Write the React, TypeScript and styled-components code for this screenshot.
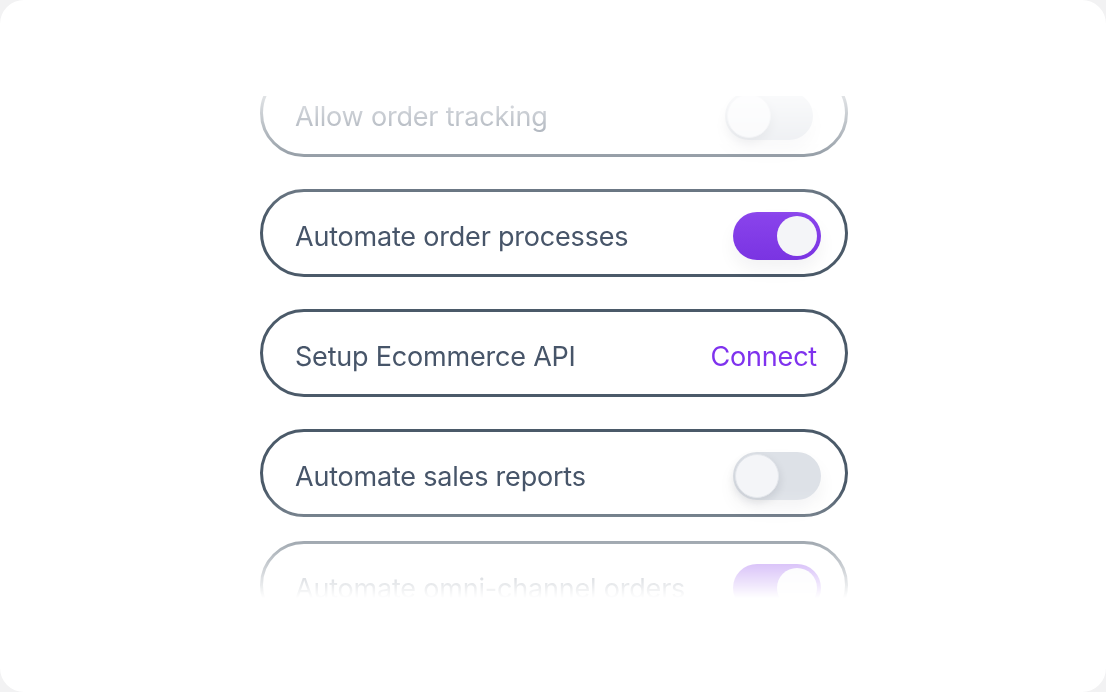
import React from "react";
import styled, { createGlobalStyle } from "styled-components";

const Global = createGlobalStyle`
  html, body { margin: 0; padding: 0; background: #f2f2f3; }
  body { font-family: Inter, "Open Sans", sans-serif; }
`;

const Card = styled.div`
  width: 1106px;
  height: 692px;
  box-sizing: border-box;
  background: #ffffff;
  border-radius: 24px;
  display: flex;
  justify-content: center;
  align-items: flex-start;
  padding: 96px 0 0 2px;
`;

const Viewport = styled.div`
  width: 590px;
  height: 503px;
  overflow: hidden;
  -webkit-mask-image: linear-gradient(
    to bottom,
    rgba(0, 0, 0, 0.17) 0px,
    #000 120px,
    #000 394px,
    transparent 502px
  );
  mask-image: linear-gradient(
    to bottom,
    rgba(0, 0, 0, 0.17) 0px,
    #000 120px,
    #000 394px,
    transparent 502px
  );
`;

const List = styled.div`
  display: flex;
  flex-direction: column;
  gap: 32px;
  padding: 0 1px;
  transform: translateY(-27px);
`;

const Row = styled.div<{ $shift?: number }>`
  height: 88px;
  box-sizing: border-box;
  border: 3px solid #4b5a69;
  border-radius: 44px;
  display: flex;
  align-items: center;
  justify-content: space-between;
  padding: 5px 24px 0 32px;
  margin-top: ${(p) => p.$shift ?? 0}px;
  background: #fff;
`;

const Label = styled.span`
  font-family: Inter, "Open Sans", sans-serif;
  font-size: 27px;
  line-height: 32px;
  padding-top: 3px;
  color: #475569;
  letter-spacing: -0.2px;
`;

const Action = styled.button`
  border: none;
  background: none;
  padding: 3px 4px 0 0;
  font-family: Inter, "Open Sans", sans-serif;
  font-size: 27px;
  line-height: 32px;
  letter-spacing: -0.2px;
  color: #7f32ee;
  cursor: pointer;
`;

const Track = styled.div<{ $on: boolean; $nudge?: number }>`
  width: 88px;
  height: 48px;
  box-sizing: border-box;
  border-radius: 24px;
  padding: 4px;
  display: flex;
  justify-content: ${(p) => (p.$on ? "flex-end" : "flex-start")};
  align-items: center;
  margin-right: ${(p) => p.$nudge ?? 0}px;
  background: ${(p) =>
    p.$on ? "linear-gradient(180deg, #8a44ec 0%, #7a34e2 100%)" : "#dde1e7"};
  box-shadow: 0 10px 18px rgba(15, 23, 42, 0.05);
`;

const Knob = styled.div<{ $on: boolean }>`
  width: 40px;
  height: 40px;
  border-radius: 50%;
  box-sizing: border-box;
  background: #f4f5f8;
  ${(p) =>
    p.$on
      ? ""
      : `
    margin-left: -2px;
    width: 44px;
    height: 44px;
    border: 1px solid #e4e7ec;
    box-shadow: 0 4px 10px rgba(15, 23, 42, 0.12);
  `}
`;

const Toggle = ({ on, nudge }: { on: boolean; nudge?: number }) => (
  <Track $on={on} $nudge={nudge} role="switch" aria-checked={on}>
    <Knob $on={on} />
  </Track>
);

export default function App() {
  return (
    <>
      <Global />
      <Card>
        <Viewport>
          <List>
            <Row>
              <Label>Allow order tracking</Label>
              <Toggle on={false} nudge={8} />
            </Row>
            <Row>
              <Label>Automate order processes</Label>
              <Toggle on />
            </Row>
            <Row>
              <Label>Setup Ecommerce API</Label>
              <Action>Connect</Action>
            </Row>
            <Row>
              <Label>Automate sales reports</Label>
              <Toggle on={false} />
            </Row>
            <Row $shift={-8}>
              <Label>Automate omni-channel orders</Label>
              <Toggle on />
            </Row>
          </List>
        </Viewport>
      </Card>
    </>
  );
}
